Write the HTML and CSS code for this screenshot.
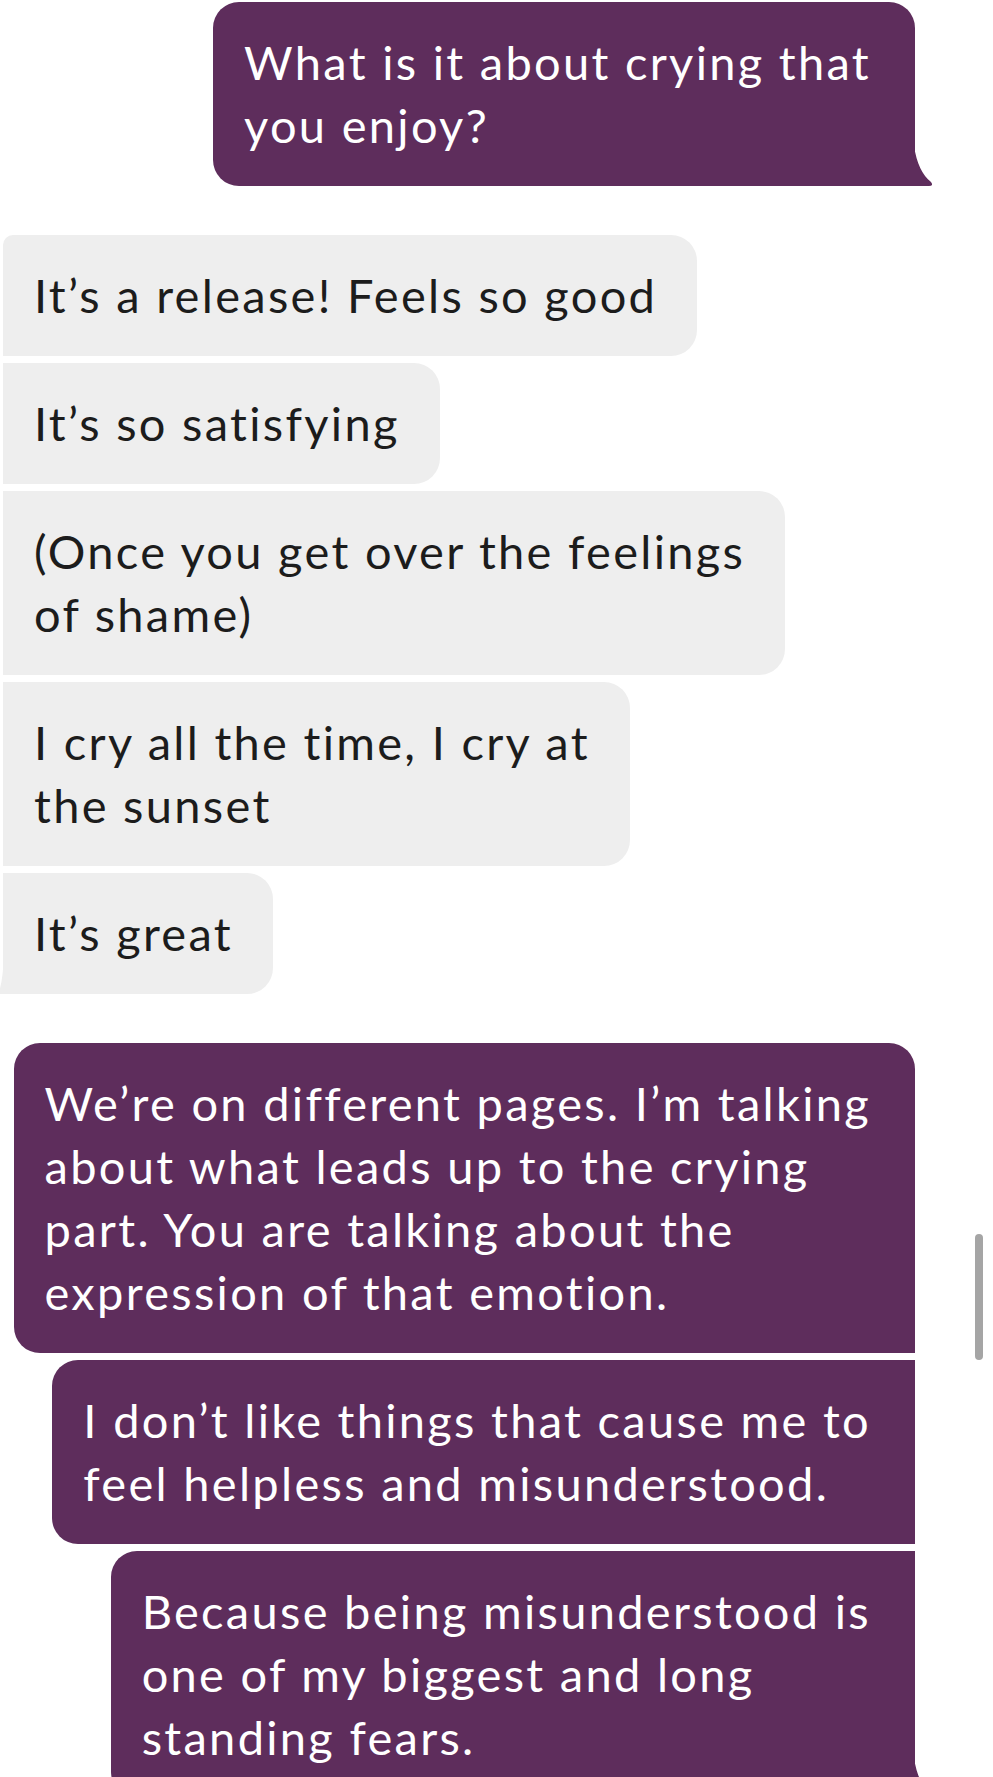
FILE: index.html
```html
<!DOCTYPE html>
<html lang="en">
<head>
    <meta charset="UTF-8">
    <meta name="viewport" content="width=device-width, initial-scale=1.0">
    <title>Chat</title>
    <link rel="stylesheet" href="styles.css">
</head>
<body>
    <div class="thread">
        <div class="group sent">
            <div class="bubble first last">What is it about crying that<br>you enjoy?</div>
        </div>

        <div class="group received">
            <div class="bubble first">It’s a release! Feels so good</div>
            <div class="bubble">It’s so satisfying</div>
            <div class="bubble">(Once you get over the feelings<br>of shame)</div>
            <div class="bubble">I cry all the time, I cry at<br>the sunset</div>
            <div class="bubble last">It’s great</div>
        </div>

        <div class="group sent">
            <div class="bubble first">We’re on different pages. I’m talking<br>about what leads up to the crying<br>part. You are talking about the<br>expression of that emotion.</div>
            <div class="bubble">I don’t like things that cause me to<br>feel helpless and misunderstood.</div>
            <div class="bubble last">Because being misunderstood is<br>one of my biggest and long<br>standing fears.</div>
        </div>
    </div>

    <div class="scroll-thumb"></div>
</body>
</html>
```

FILE: styles.css
```css
body {
    margin: 0;
    background-color: #ffffff;
    font-family: Lato, 'Noto Sans', sans-serif;
    overflow: hidden;
}

.thread {
    display: flex;
    flex-direction: column;
    gap: 49px;
    padding-top: 2px;
}

.group {
    display: flex;
    flex-direction: column;
    gap: 7px;
}

.bubble {
    position: relative;
    width: fit-content;
    padding: 29px 40px 29px 31px;
    font-size: 47px;
    line-height: 63px;
    letter-spacing: 2.3px;
    white-space: nowrap;
}

/* outgoing, purple, right side */
.sent {
    align-items: flex-end;
    margin-right: 78px;
}

.sent .bubble {
    padding-right: 44px;
    background-color: #5e2d5c;
    color: #ffffff;
    border-radius: 26px 0 0 26px;
}

.sent .bubble.first {
    border-top-right-radius: 26px;
}

.sent .bubble.last::after {
    content: '';
    position: absolute;
    right: -19px;
    bottom: 0;
    width: 20px;
    height: 40px;
    background-color: #5e2d5c;
    clip-path: path('M0 0 Q 4 26 17 36 Q 20 40 15 40 L 0 40 Z');
}

/* incoming, grey, left side */
.received {
    align-items: flex-start;
    margin-left: 3px;
}

.received .bubble {
    background-color: #eeeeee;
    color: #1c1c1c;
    border-radius: 0 26px 26px 0;
}

.received .bubble.first {
    border-top-left-radius: 10px;
}

.received .bubble.last::after {
    content: '';
    position: absolute;
    left: -4px;
    bottom: 0;
    width: 5px;
    height: 40px;
    background-color: #eeeeee;
    clip-path: path('M5 0 Q 4 26 0 38 L 0 40 L 5 40 Z');
}

.scroll-thumb {
    position: fixed;
    top: 1234px;
    left: 975px;
    width: 8px;
    height: 126px;
    border-radius: 4px;
    background-color: #a5a5a5;
}
```
